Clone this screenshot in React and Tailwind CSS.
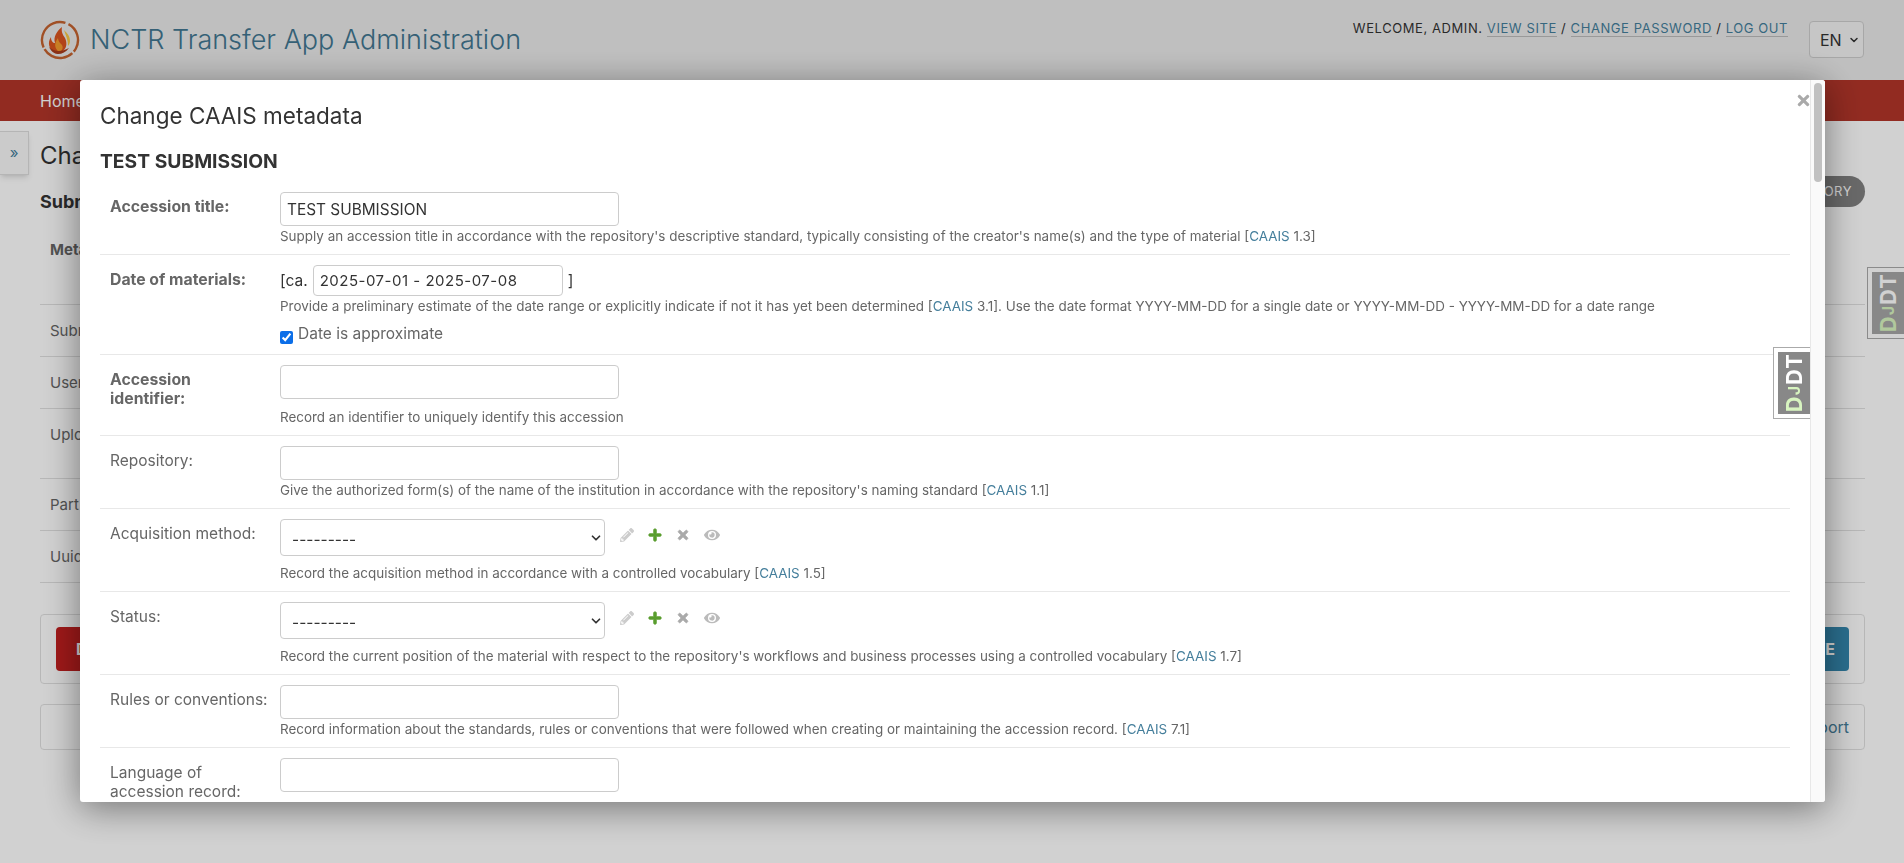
import { FaPencilAlt, FaPlus, FaTimes, FaEye } from 'react-icons/fa';
import { ChevronDown } from 'lucide-react';

const backRows = [
  { label: 'Submission date', h: 'h-[52px]' },
  { label: 'User', h: 'h-[52px]' },
  { label: 'Upload session', h: 'h-[70px]' },
  { label: 'Part of group', h: 'h-[52px]' },
  { label: 'Uuid', h: 'h-[52px]' },
];

function Logo() {
  return (
    <svg width="40" height="40" viewBox="0 0 40 40" className="shrink-0">
      <circle cx="20" cy="20" r="18" fill="none" stroke="#c4622f" strokeWidth="2.4" strokeDasharray="32 2 32 2 41 4" transform="rotate(-62 20 20)" />
      <path d="M15 33c-6-4-8-10-4-16 0 4 2 6 4 6-2-6 2-12 7-16-1 5 1 8 3 11 2 4 2 9-1 12-3 3-6 4-9 3z" fill="#d9531e" />
      <path d="M17 30c-3-4-2-8 1-12 0 3 2 5 4 7 1 2 1 4-1 6-1 1-3 1-4-1z" fill="#f39a2c" />
      <path d="M24 10c3 3 6 6 6 11 0 2-1 4-2 5 0-6-2-10-4-16z" fill="#f7c744" />
      <path d="M9 27c4 4 11 6 20 1-3 4-7 6-11 6s-7-3-9-7z" fill="#a93c1c" />
    </svg>
  );
}

// Django debug toolbar handle, one on the page and one inside the modal
function DjdtHandle({ className, inner }) {
  return (
    <div className={`border-y border-l border-[#aaaaaa] bg-white py-[4px] pl-[4px] ${className}`}>
      <div className={`h-full ${inner} flex items-center justify-center`}>
        <span className="[writing-mode:vertical-rl] rotate-180 font-bold text-[22px] leading-none text-white tracking-[1px]">
          <span className="text-[#d8f5c0]">D</span>
          <span className="text-[#d8f5c0] text-[16px]">J</span>
          DT
        </span>
      </div>
    </div>
  );
}

function Caais({ n }) {
  return (
    <>
      [<span className="text-[#447e9b]">CAAIS</span> {n}]
    </>
  );
}

function Help({ className = 'mt-[2px]', children }) {
  return <p className={`${className} h-[16px] text-[13.45px] leading-[17px] text-[#666666] whitespace-nowrap`}>{children}</p>;
}

function TextBox({ value = '', className = 'h-[34px]' }) {
  return (
    <input
      readOnly
      value={value}
      className={`w-[339px] ${className} block rounded-[4px] border border-[#cccccc] bg-white px-[6px] text-[15.4px] text-[#333333] outline-none`}
    />
  );
}

function SelectRow() {
  return (
    <div className="flex items-start">
      <div className="relative w-[325px]">
        <select className="block h-[37px] w-full appearance-none rounded-[4px] border border-[#cccccc] bg-white pl-[11px] pt-[4px] text-[15.5px] text-[#333333] outline-none">
          <option>---------</option>
        </select>
        <ChevronDown size={14} strokeWidth={3} className="absolute right-[2px] top-[12px] text-[#333333] pointer-events-none" />
      </div>
      <div className="flex items-center h-[31px] ml-[15px] gap-[14px]">
        <FaPencilAlt size={14} className="text-[#cccccc]" />
        <FaPlus size={14} stroke="currentColor" strokeWidth={30} className="text-[#5a9e2f]" />
        <FaTimes size={14} stroke="currentColor" strokeWidth={30} className="text-[#aaaaaa]" />
        <FaEye size={16} className="text-[#bbbbbb]" />
      </div>
    </div>
  );
}

function Row({ label, bold, last, children }) {
  return (
    <div className={`flex pt-[10px] pb-[10px] ${last ? '' : 'border-b border-[#e8e8e8]'}`}>
      <label className={`w-[180px] shrink-0 pl-[10px] pr-[6px] pt-[5px] leading-[19px] text-[#666666] ${bold ? 'text-[15.8px] font-bold' : 'text-[15.5px]'}`}>
        {label}
      </label>
      <div className="min-w-0 flex-1">{children}</div>
    </div>
  );
}

function Modal() {
  return (
    <div className="fixed left-[80px] top-[80px] w-[1745px] h-[722px] bg-white rounded-[3px] overflow-hidden flex shadow-[0_6px_36px_rgba(0,0,0,0.45)]">
      <div className="relative flex-1 min-w-0 pl-[20px] pr-[20px]">
        <h2 className="pt-[21px] text-[22.5px] leading-[30px] text-[#333333]">Change CAAIS metadata</h2>
        <h3 className="mt-[18px] h-[33px] text-[19.3px] leading-[24px] font-bold text-[#333333]">TEST SUBMISSION</h3>

        <Row label="Accession title:" bold>
          <TextBox value="TEST SUBMISSION" />
          <Help>
            Supply an accession title in accordance with the repository's descriptive standard, typically consisting of the creator's name(s) and the type of material <Caais n="1.3" />
          </Help>
        </Row>

        <Row label="Date of materials:" bold>
          <div className="flex items-center text-[15.5px] text-[#333333]">
            <span>[ca.</span>
            <input readOnly value="2025-07-01 - 2025-07-08" className="ml-[5px] h-[31px] w-[250px] rounded-[4px] border border-[#cccccc] bg-white px-[6px] text-[15px] tracking-[0.5px] text-[#333333] outline-none" />
            <span className="ml-[5px]">]</span>
          </div>
          <Help>
            Provide a preliminary estimate of the date range or explicitly indicate if not it has yet been determined <Caais n="3.1" />. Use the date format YYYY-MM-DD for a single date or YYYY-MM-DD - YYYY-MM-DD for a date range
          </Help>
          <div className="mt-[10px] h-[20px] flex items-center text-[15.5px] text-[#666666]">
            <input type="checkbox" defaultChecked className="m-0 mt-[7px] accent-[#0b6ee8]" />
            <span className="ml-[5px]">Date is approximate</span>
          </div>
        </Row>

        <Row label={<>Accession<br />identifier:</>} bold>
          <TextBox />
          <Help className="mt-[10px]">Record an identifier to uniquely identify this accession</Help>
        </Row>

        <Row label="Repository:">
          <TextBox />
          <Help>
            Give the authorized form(s) of the name of the institution in accordance with the repository's naming standard <Caais n="1.1" />
          </Help>
        </Row>

        <Row label="Acquisition method:">
          <SelectRow />
          <Help className="mt-[9px]">
            Record the acquisition method in accordance with a controlled vocabulary <Caais n="1.5" />
          </Help>
        </Row>

        <Row label="Status:">
          <SelectRow />
          <Help className="mt-[9px]">
            Record the current position of the material with respect to the repository's workflows and business processes using a controlled vocabulary <Caais n="1.7" />
          </Help>
        </Row>

        <Row label="Rules or conventions:">
          <TextBox />
          <Help>
            Record information about the standards, rules or conventions that were followed when creating or maintaining the accession record. <Caais n="7.1" />
          </Help>
        </Row>

        <Row label={<>Language of<br />accession record:</>} last>
          <TextBox />
        </Row>

        <FaTimes size={17} className="absolute right-[-2px] top-[12px] text-[#aaaaaa]" />
        <DjdtHandle inner="bg-[#888888]" className="absolute right-0 top-[267px] w-[37px] h-[72px]" />
      </div>

      <div className="w-[15px] shrink-0 bg-[#fafafa] border-l border-[#e8e8e8]">
        <div className="mx-auto mt-[3px] h-[99px] w-[8px] rounded-full bg-[#c1c1c1]" />
      </div>
    </div>
  );
}

export default function App() {
  return (
    <div className="relative h-screen overflow-hidden bg-white font-[Inter,sans-serif] text-[#333333]">
      {/* page behind the modal */}
      <header className="h-[80px] bg-[#eaeaea] flex pl-[40px] pr-[40px]">
        <div className="flex items-center">
          <Logo />
          <h1 className="ml-[10px] text-[27px] font-light text-[#417690]">NCTR Transfer App Administration</h1>
        </div>
        <div className="ml-auto flex items-start">
          <p className="mt-[19px] text-[13px] leading-[18px] tracking-[0.58px] uppercase text-[#333333]">
            Welcome, admin. <span className="text-[#447e9b] border-b border-[#bbbbbb]">View site</span> / <span className="text-[#447e9b] border-b border-[#bbbbbb]">Change password</span> / <span className="text-[#447e9b] border-b border-[#bbbbbb]">Log out</span>
          </p>
          <div className="ml-[21px] mt-[21px] w-[55px] h-[37px] rounded-[4px] border border-[#cccccc] bg-white/40 flex items-center pl-[10px] gap-[6px] text-[16px]">
            EN
            <ChevronDown size={12} strokeWidth={3} />
          </div>
        </div>
      </header>

      <nav className="h-[41px] bg-[#b23529] pl-[40px] flex items-center text-[16px] text-white">Home</nav>

      <main className="flex">
        <div className="mt-[10px] h-[44px] w-[29px] shrink-0 bg-[#f8f8f8] border border-l-0 border-[#dddddd] shadow-md flex items-center justify-center text-[#447e9b] text-[15px]">»</div>
        <div className="ml-[11px] w-[1825px]">
          <div className="flex justify-between items-start">
            <div>
              <h2 className="mt-[20px] text-[24px] leading-[30px]">Cha</h2>
              <h3 className="mt-[16px] text-[18px] leading-[30px] font-bold">Subm</h3>
            </div>
            <span className="mt-[55px] h-[31px] rounded-full bg-[#808080] pl-[14px] pr-[13px] flex items-center text-[13px] tracking-[0.5px] text-white">HISTORY</span>
          </div>
          <div className="mt-[3px] h-[85px] pl-[10px] pt-[17px] border-b border-[#e0e0e0]">
            <span className="text-[15px] leading-[20px] font-bold text-[#666666]">Metadata</span>
          </div>
          {backRows.map((r) => (
            <div key={r.label} className={`${r.h} pl-[10px] pt-[16px] border-b border-[#e0e0e0] text-[15px] leading-[20px] text-[#666666]`}>
              {r.label}
            </div>
          ))}
          <div className="mt-[31px] h-[70px] rounded-[4px] border border-[#e0e0e0] px-[15px] flex items-center justify-between">
            <span className="h-[44px] rounded-[4px] bg-[#c21f1f] pl-[20px] pr-[20px] flex items-center text-[16px] font-bold text-white">DELETE</span>
            <span className="h-[44px] rounded-[4px] bg-[#3487ae] pl-[20px] pr-[14px] flex items-center text-[16px] font-bold text-white">SAVE</span>
          </div>
          <div className="mt-[20px] h-[46px] rounded-[4px] border border-[#e0e0e0] pr-[15px] flex items-center justify-end text-[16px] text-[#447e9b]">Report</div>
        </div>
      </main>

      <DjdtHandle inner="bg-[#a6a6a6]" className="absolute right-0 top-[267px] w-[37px] h-[72px]" />

      {/* modal backdrop */}
      <div className="fixed inset-0 bg-black/[0.18]" />
      <Modal />
    </div>
  );
}
